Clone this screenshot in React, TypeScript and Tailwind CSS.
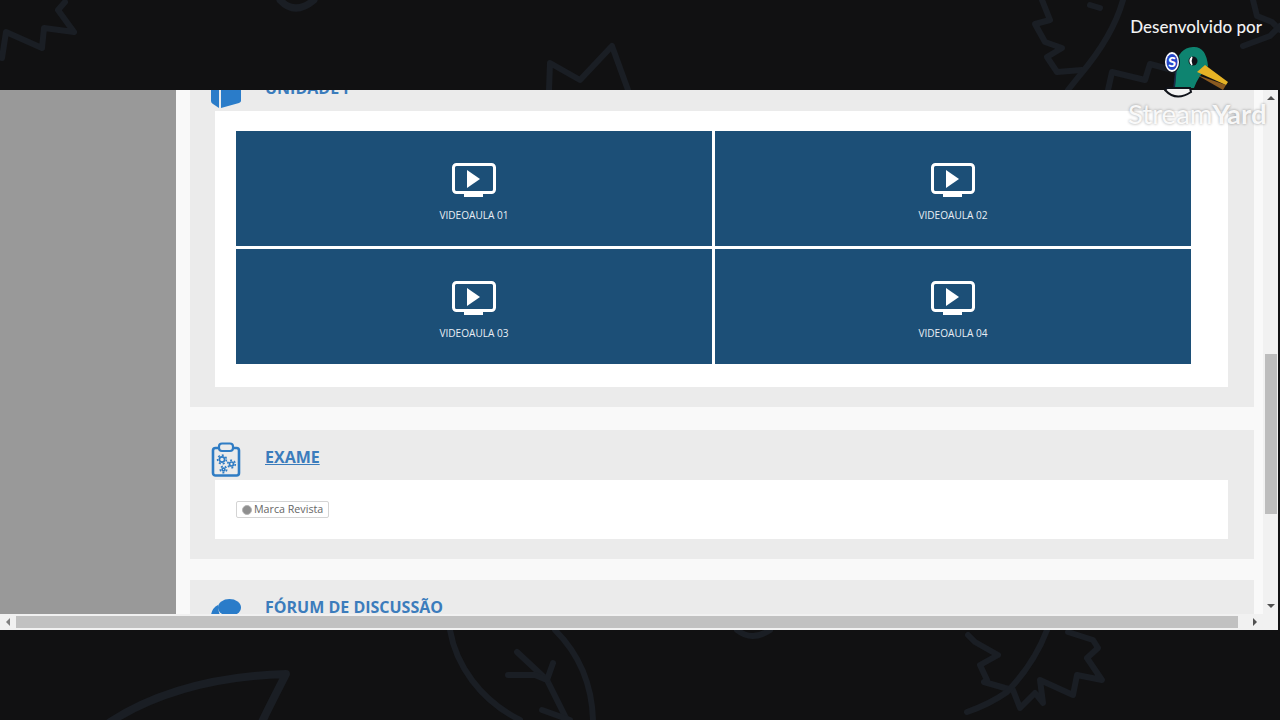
const tiles = ["VIDEOAULA 01", "VIDEOAULA 02", "VIDEOAULA 03", "VIDEOAULA 04"];

const Backdrop = () => (
  <svg className="absolute inset-0" width="1280" height="720" viewBox="0 0 1280 720" fill="none" stroke="#1a1e24" strokeWidth="6" strokeLinecap="round" strokeLinejoin="round">
    <path d="M65 2 L58 10 L74 32 L44 28 L42 48 L6 32 L2 58" />
    <path d="M280 0 Q295 16 314 0" strokeWidth="7" />
    <path d="M549 90 L550 63 L580 80 L612 46 L628 90" />
    <path d="M1042 0 L1050 20 L1035 24 L1045 42 L1062 48 L1047 57 L1057 72 L1082 70" />
    <path d="M1123 0 Q1113 36 1080 75 L1068 90" />
    <path d="M1090 5 L1100 8" />
    <path d="M1108 90 L1112 72 L1145 80 L1150 64 L1180 72" />
    <path d="M1253 0 L1257 16 L1272 22 L1280 30" />
    <path d="M1243 46 L1270 36 L1280 26" />
    <path d="M450 630 C456 665 480 700 520 720" />
    <path d="M555 630 C580 655 592 685 593 720" />
    <path d="M517 652 L547 680 L567 720" />
    <path d="M508 675 L535 675 L547 680 L553 663" />
    <path d="M542 710 L570 720" />
    <path d="M737 630 Q752 642 770 630" />
    <path d="M968 635 L975 642 L998 655 L980 665 L987 680 L984 682 L1005 688 L1013 690 L1020 708 L1035 693 L1043 703 L1040 680 L1073 695 L1077 675 L1102 680 L1087 658 L1098 648 L1093 640 L1068 632" />
    <path d="M1047 630 Q1034 664 1007 692 Q990 704 967 712" />
    <path d="M110 722 C160 690 220 676 286 674 C278 690 270 705 262 722" strokeWidth="8" />
  </svg>
);

const TvIcon = () => (
  <svg width="44" height="34" viewBox="0 0 44 34" fill="none">
    <rect x="1.5" y="1.5" width="41" height="28" rx="3" stroke="white" strokeWidth="3" />
    <path d="M15 7 L28 16 L15 25 Z" fill="white" />
    <rect x="12" y="30" width="19" height="4" fill="white" />
  </svg>
);

const Tile = ({ label }: { label: string }) => (
  <div className="h-[115px] bg-[#1c4f77] flex flex-col items-center pt-[32px]">
    <TvIcon />
    <span className="mt-[11px] text-[10.1px] leading-[14px] text-[#e8eef4]">{label}</span>
  </div>
);

const Gear = ({ x, y, r }: { x: number; y: number; r: number }) => (
  <g>
    <circle cx={x} cy={y} r={r} strokeWidth="1.7" />
    <circle cx={x} cy={y} r={r + 1.8} strokeWidth="1.6" strokeDasharray="2 2" />
  </g>
);

const ClipboardIcon = () => (
  <svg className="mt-[6px]" width="30" height="36" viewBox="0 0 30 36" fill="none" stroke="#2f7cc4">
    <rect x="2" y="6" width="26" height="27.5" rx="2.5" strokeWidth="2.6" />
    <rect x="8" y="1.5" width="14" height="7.5" rx="3" fill="#ebebeb" strokeWidth="2.2" />
    <Gear x={11} y={17.5} r={2.6} />
    <Gear x={20.5} y={22} r={2} />
    <Gear x={12.5} y={27.5} r={1.4} />
  </svg>
);

const BookIcon = () => (
  <svg width="30" height="40" viewBox="0 0 30 40">
    <path d="M0 18 H8 V40 L2 36 Q0 35 0 33 Z M10 18 H30 V33 Q30 34 28 35 L10 40 Z" fill="#2a7cc9" />
  </svg>
);

const ChatIcon = () => (
  <svg width="30" height="16" viewBox="0 0 30 16">
    <ellipse cx="18.5" cy="8.5" rx="11.5" ry="8.5" fill="#2a7cc9" />
    <path d="M0 16 Q1 9 7 6 Q7 12 9 16 Z" fill="#2a7cc9" />
  </svg>
);

const Header = ({ icon, title, underline }: { icon: React.ReactNode; title: string; underline?: boolean }) => (
  <div className="h-[50px] pt-[4px] flex items-center pl-[21px]">
    <div className="w-[30px] flex justify-center">{icon}</div>
    <span className={`ml-[24px] font-['Open_Sans'] font-bold text-[16px] text-[#3b7cbc] ${underline ? "underline" : ""}`}>{title}</span>
  </div>
);

const App = () => {
  return (
    <div className="relative w-[1280px] h-[720px] overflow-hidden bg-[#111112] font-['Open_Sans',sans-serif]">
      <Backdrop />

      <div className="relative h-[90px] flex justify-end">
        <span className="mt-[17px] mr-[18px] h-[20px] font-['Lato'] font-medium text-[17px] leading-[20px] text-[#f2f2f2]">Desenvolvido por</span>
      </div>

      <div className="relative w-[1278px] h-[540px] bg-[#f5f5f5] flex flex-col">
        <div className="h-[524px] flex">
          <div className="w-[176px] bg-[#999999]" />
          <div className="flex-1 bg-[#f9f9f9] overflow-hidden pl-[14px] pr-[9px]">
            <div className="-mt-[29px] bg-[#ebebeb] pb-[20px]">
              <Header icon={<BookIcon />} title="UNIDADE I" />
              <div className="ml-[25px] mr-[26px] bg-white pt-[20px] pb-[23px] pl-[21px] pr-[37px]">
                <div className="grid grid-cols-2 gap-[3px]">
                  {tiles.map((t) => (
                    <Tile key={t} label={t} />
                  ))}
                </div>
              </div>
            </div>

            <div className="mt-[23px] bg-[#ebebeb] pb-[20px]">
              <Header icon={<ClipboardIcon />} title="EXAME" underline />
              <div className="ml-[25px] mr-[26px] h-[59px] bg-white pl-[21px] pt-[21px]">
                <div className="w-[93px] h-[17px] flex items-center gap-[2px] pl-[5px] bg-white border border-[#d4d4d4] rounded-[2px]">
                  <span className="w-[10px] h-[10px] rounded-full bg-[#8f8f8f] border border-[#b5b5b5]" />
                  <span className="text-[10.7px] leading-none text-[#666666]">Marca Revista</span>
                </div>
              </div>
            </div>

            <div className="mt-[21px] bg-[#ebebeb] h-[60px]">
              <Header icon={<div className="h-[50px] pt-[17px]"><ChatIcon /></div>} title="FÓRUM DE DISCUSSÃO" />
            </div>
          </div>

          <div className="w-[15px] bg-[#f1f1f1] flex flex-col items-center">
            <div className="h-[16px] flex items-center justify-center">
              <div className="w-0 h-0 border-x-[4px] border-x-transparent border-b-[4px] border-b-[#505050]" />
            </div>
            <div className="mt-[248px] w-[12px] h-[160px] bg-[#bdbdbd]" />
            <div className="mt-auto h-[16px] flex items-center justify-center">
              <div className="w-0 h-0 border-x-[4px] border-x-transparent border-t-[4px] border-t-[#505050]" />
            </div>
          </div>
        </div>

        <div className="h-[16px] bg-[#f1f1f1] flex items-center">
          <div className="w-[16px] flex justify-center">
            <div className="w-0 h-0 border-y-[4px] border-y-transparent border-r-[4px] border-r-[#808080]" />
          </div>
          <div className="w-[1222px] h-[12px] bg-[#c1c1c1]" />
          <div className="ml-[13px] w-[8px] flex justify-center">
            <div className="w-0 h-0 border-y-[4px] border-y-transparent border-l-[4px] border-l-[#505050]" />
          </div>
        </div>
      </div>

      <div className="absolute left-[1164px] top-[46px] w-[66px] h-[54px]">
        <svg width="66" height="54" viewBox="0 0 66 54">
          <path d="M11 42 L12 20 Q14 2 29 1 Q42 0 44 20 L36 30 Q32 36 30 42 Z" fill="#0e8470" />
          <path d="M12 24 L10 42" stroke="#1a2b4a" strokeWidth="1.5" fill="none" />
          <path d="M1 44 Q12 56 27 46 L26 42 L3 42 Z" fill="#f4f4f4" stroke="#10131a" strokeWidth="2" />
          <path d="M33 29 L62 39 L59 44 Z" fill="#8a5a20" />
          <path d="M41 19 L64 36 L62 39 L33 26 Z" fill="#e6b325" />
          <circle cx="29" cy="15" r="4.5" fill="#10131a" />
          <path d="M28 11 Q24 15 28 19 Q26 15 28 11 Z" fill="white" stroke="white" strokeWidth="1.2" />
          <ellipse cx="8" cy="16" rx="8" ry="11" fill="#10131a" />
          <ellipse cx="8" cy="16" rx="7" ry="10" fill="#ffffff" />
          <ellipse cx="8" cy="16" rx="5.5" ry="8" fill="#2646c8" />
        </svg>
      </div>
      <span className="absolute left-[1168px] top-[54px] w-[8px] text-center font-['Lato'] font-black text-[14px] leading-[16px] text-white">S</span>
      <span className="absolute left-[1128px] top-[99px] font-['Lato'] text-[27.5px] leading-[30px] text-white/90 [text-shadow:0_0_3px_rgba(0,0,0,0.4)]">
        Stream<span className="font-bold">Yard</span>
      </span>
    </div>
  );
};

export default App;
